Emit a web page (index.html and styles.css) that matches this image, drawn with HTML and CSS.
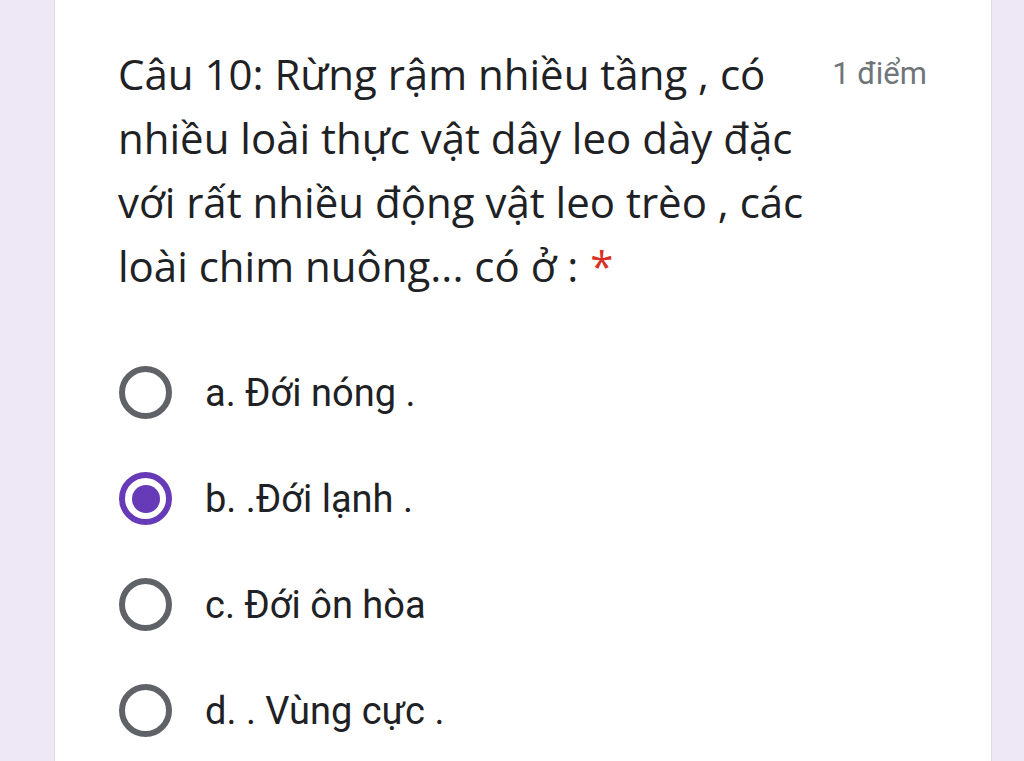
FILE: index.html
```html
<!DOCTYPE html>
<html lang="vi">
<head>
<meta charset="utf-8">
<link rel="stylesheet" href="styles.css">
</head>
<body>
<div class="card">
  <div class="question">
    <div class="title">Câu 10: Rừng rậm nhiều tầng , có nhiều loài thực vật dây leo dày đặc với rất nhiều động vật leo trèo , các loài chim nuông... có ở :<span class="req">*</span></div>
    <div class="points">1 điểm</div>
  </div>
  <div class="options">
    <div class="option"><span class="radio"></span><span class="label">a. Đới nóng .</span></div>
    <div class="option"><span class="radio checked"></span><span class="label">b. .Đới lạnh .</span></div>
    <div class="option"><span class="radio"></span><span class="label">c. Đới ôn hòa</span></div>
    <div class="option"><span class="radio"></span><span class="label">d. . Vùng cực .</span></div>
  </div>
</div>
</body>
</html>
```
FILE: styles.css
```css
html, body {
  margin: 0;
  height: 100%;
}
body {
  background: #ede7f6;
  overflow: hidden;
}
.card {
  margin-left: 54px;
  width: 938px;
  height: 100%;
  background: #fff;
  border-left: 1px solid #dadce0;
  border-right: 1px solid #dadce0;
  box-sizing: border-box;
  padding: 42px 0 0 0;
}
.question {
  display: flex;
  align-items: flex-start;
  padding: 0 64px 0 63px;
}
.title {
  flex: 0 0 700px;
  font-family: "Open Sans", sans-serif;
  font-size: 42px;
  line-height: 64px;
  color: #202124;
}
.req {
  display: inline-block;
  color: #d93025;
  margin-left: 12px;
  line-height: 1;
  vertical-align: baseline;
}
.points {
  margin-left: auto;
  font-family: Roboto, sans-serif;
  font-size: 31px;
  line-height: 64px;
  color: #70757a;
}
.options {
  padding: 68px 0 0 64px;
  display: flex;
  flex-direction: column;
  gap: 53px;
}
.option {
  display: flex;
  align-items: center;
  height: 53px;
}
.radio {
  width: 53px;
  height: 53px;
  box-sizing: border-box;
  border: 6px solid #5f6368;
  border-radius: 50%;
  display: flex;
  align-items: center;
  justify-content: center;
  flex: none;
}
.radio.checked {
  border-color: #673ab7;
}
.radio.checked::after {
  content: "";
  width: 28px;
  height: 28px;
  border-radius: 50%;
  background: #673ab7;
}
.label {
  margin-left: 33px;
  font-family: Roboto, sans-serif;
  font-size: 38px;
  color: #202124;
}
```
